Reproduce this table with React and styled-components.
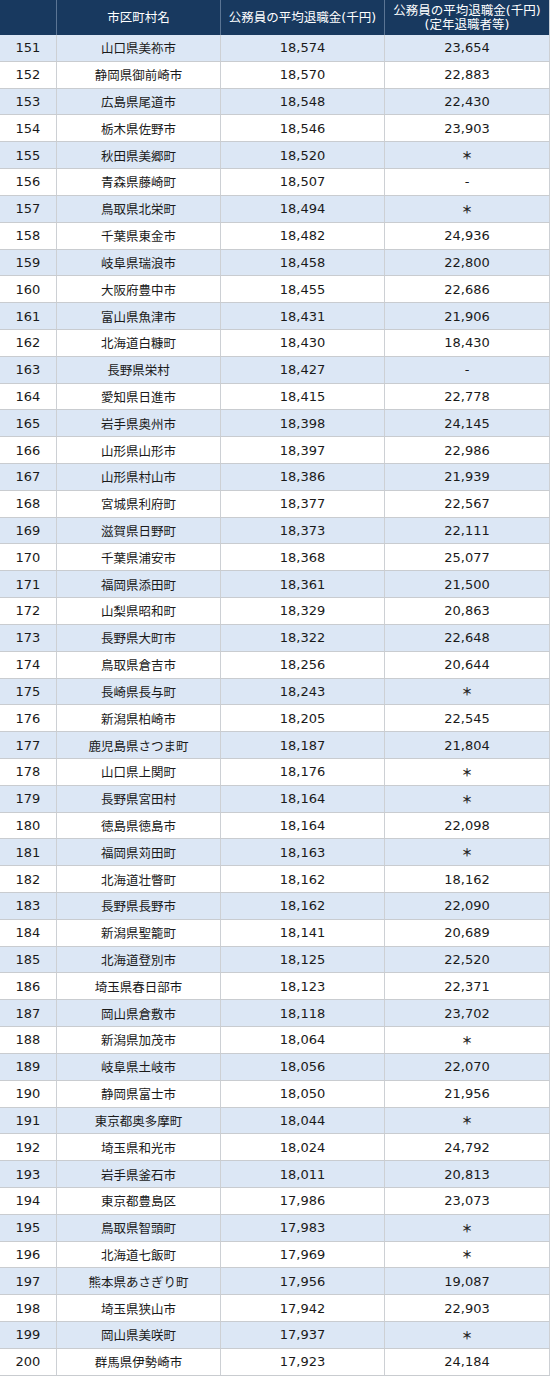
import React from "react";
import styled, { createGlobalStyle } from "styled-components";

const GlobalStyle = createGlobalStyle`
  html, body { margin: 0; padding: 0; background: #ffffff; }
  body { font-family: "DejaVu Sans", "Noto Sans CJK JP", sans-serif; }
`;

const data = [
  [151, "山口県美祢市", "18,574", "23,654"],
  [152, "静岡県御前崎市", "18,570", "22,883"],
  [153, "広島県尾道市", "18,548", "22,430"],
  [154, "栃木県佐野市", "18,546", "23,903"],
  [155, "秋田県美郷町", "18,520", "＊"],
  [156, "青森県藤崎町", "18,507", "-"],
  [157, "鳥取県北栄町", "18,494", "＊"],
  [158, "千葉県東金市", "18,482", "24,936"],
  [159, "岐阜県瑞浪市", "18,458", "22,800"],
  [160, "大阪府豊中市", "18,455", "22,686"],
  [161, "富山県魚津市", "18,431", "21,906"],
  [162, "北海道白糠町", "18,430", "18,430"],
  [163, "長野県栄村", "18,427", "-"],
  [164, "愛知県日進市", "18,415", "22,778"],
  [165, "岩手県奥州市", "18,398", "24,145"],
  [166, "山形県山形市", "18,397", "22,986"],
  [167, "山形県村山市", "18,386", "21,939"],
  [168, "宮城県利府町", "18,377", "22,567"],
  [169, "滋賀県日野町", "18,373", "22,111"],
  [170, "千葉県浦安市", "18,368", "25,077"],
  [171, "福岡県添田町", "18,361", "21,500"],
  [172, "山梨県昭和町", "18,329", "20,863"],
  [173, "長野県大町市", "18,322", "22,648"],
  [174, "鳥取県倉吉市", "18,256", "20,644"],
  [175, "長崎県長与町", "18,243", "＊"],
  [176, "新潟県柏崎市", "18,205", "22,545"],
  [177, "鹿児島県さつま町", "18,187", "21,804"],
  [178, "山口県上関町", "18,176", "＊"],
  [179, "長野県宮田村", "18,164", "＊"],
  [180, "徳島県徳島市", "18,164", "22,098"],
  [181, "福岡県苅田町", "18,163", "＊"],
  [182, "北海道壮瞥町", "18,162", "18,162"],
  [183, "長野県長野市", "18,162", "22,090"],
  [184, "新潟県聖籠町", "18,141", "20,689"],
  [185, "北海道登別市", "18,125", "22,520"],
  [186, "埼玉県春日部市", "18,123", "22,371"],
  [187, "岡山県倉敷市", "18,118", "23,702"],
  [188, "新潟県加茂市", "18,064", "＊"],
  [189, "岐阜県土岐市", "18,056", "22,070"],
  [190, "静岡県富士市", "18,050", "21,956"],
  [191, "東京都奥多摩町", "18,044", "＊"],
  [192, "埼玉県和光市", "18,024", "24,792"],
  [193, "岩手県釜石市", "18,011", "20,813"],
  [194, "東京都豊島区", "17,986", "23,073"],
  [195, "鳥取県智頭町", "17,983", "＊"],
  [196, "北海道七飯町", "17,969", "＊"],
  [197, "熊本県あさぎり町", "17,956", "19,087"],
  [198, "埼玉県狭山市", "17,942", "22,903"],
  [199, "岡山県美咲町", "17,937", "＊"],
  [200, "群馬県伊勢崎市", "17,923", "24,184"],
];

const Table = styled.div`
  display: flex;
  flex-direction: column;
  width: 550px;
  height: 1376px;
  overflow: hidden;
`;

const HeaderRow = styled.div`
  display: grid;
  grid-template-columns: 57px 164px 164px 1fr;
  flex: 0 0 35px;
  background: #18395f;
`;

const HeadCell = styled.div`
  display: flex;
  flex-direction: column;
  align-items: center;
  justify-content: center;
  color: #ffffff;
  font-size: 12.5px;
  line-height: 14px;
  text-align: center;
  border-right: 1px solid ${(p) => (p.$last ? "#c8ced6" : "#5b7594")};
  box-sizing: border-box;
  white-space: nowrap;
`;

const Row = styled.div`
  display: grid;
  grid-template-columns: 57px 164px 164px 1fr;
  flex: 1 1 0;
  min-height: 0;
  background: ${(p) => (p.$odd ? "#dce7f5" : "#ffffff")};
  border-bottom: 1px solid #c9ccd0;
  box-sizing: border-box;
`;

const Cell = styled.div`
  display: flex;
  align-items: center;
  justify-content: center;
  color: #1a1a1a;
  font-size: ${(p) => (p.$cjk ? "12.5px" : "13px")};
  border-right: 1px solid #cdd0d4;
  box-sizing: border-box;
  white-space: nowrap;
`;

const Mark = styled.span`
  font-family: "Noto Sans CJK JP", sans-serif;
  font-size: 11px;
  font-weight: 700;
  color: #2a2a2a;
`;

export default function App() {
  return (
    <>
      <GlobalStyle />
      <Table>
        <HeaderRow>
          <HeadCell />
          <HeadCell>市区町村名</HeadCell>
          <HeadCell>公務員の平均退職金(千円)</HeadCell>
          <HeadCell $last>
            <span>公務員の平均退職金(千円)</span>
            <span>(定年退職者等)</span>
          </HeadCell>
        </HeaderRow>
        {data.map(([rank, name, avg, retire], i) => (
          <Row key={rank} $odd={i % 2 === 0}>
            <Cell>{rank}</Cell>
            <Cell $cjk>{name}</Cell>
            <Cell>{avg}</Cell>
            <Cell>{retire === "＊" ? <Mark>＊</Mark> : retire}</Cell>
          </Row>
        ))}
      </Table>
    </>
  );
}
